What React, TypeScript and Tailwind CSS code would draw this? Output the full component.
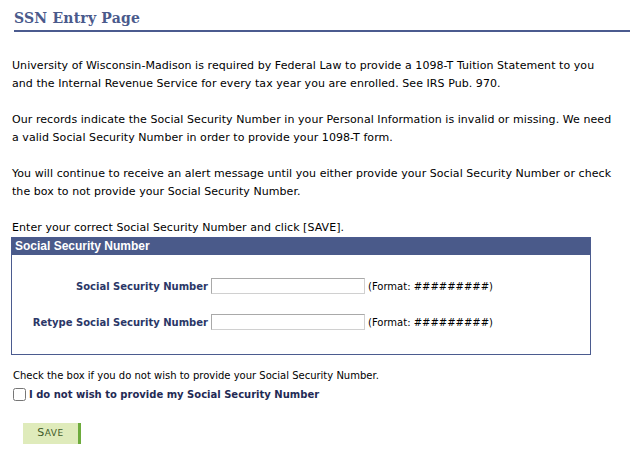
import React from "react";

const verdana = "font-['DejaVu_Sans',Verdana,sans-serif]";

function FieldRow({ label }: { label: string }) {
  return (
    <div className="flex items-center h-[16px]">
      <div className={`w-[199px] text-right pr-[3px] text-[10px] font-bold text-[#2b3767] ${verdana}`}>{label}</div>
      <input
        type="text"
        className="w-[154px] h-[16px] border border-[#a9a9a9] border-b-[#d0d0d0] border-r-[#d0d0d0] bg-white outline-none"
      />
      <span className={`ml-[3px] text-[10px] text-[#000] ${verdana}`}>(Format: #########)</span>
    </div>
  );
}

export default function App() {
  return (
    <div className={`w-[630px] h-[457px] bg-white text-black ${verdana}`}>
      <div className="pl-[14px] pt-[9px]">
        <h1 className="font-['DejaVu_Serif',Georgia,serif] font-bold text-[14px] leading-[18px] text-[#4a5a8c] tracking-[0.2px]">
          SSN Entry Page
        </h1>
        <div className="mt-[3px] h-[2px] bg-[#4b5b8f]" />
      </div>

      <div className="pl-[12px] w-[614px] pt-[25px] text-[11px] leading-[18px] tracking-[0.06px]">
        <p>
          University of Wisconsin-Madison is required by Federal Law to provide a 1098-T Tuition Statement to you
          <br />
          and the Internal Revenue Service for every tax year you are enrolled. See IRS Pub. 970.
        </p>
        <p className="mt-[18px]">
          Our records indicate the Social Security Number in your Personal Information is invalid or missing. We need a
          valid Social Security Number in order to provide your 1098-T form.
        </p>
        <p className="mt-[18px]">
          You will continue to receive an alert message until you either provide your Social Security Number or check
          the box to not provide your Social Security Number.
        </p>
        <p className="mt-[18px]">Enter your correct Social Security Number and click [SAVE].</p>
      </div>

      <div className="ml-[11px] w-[580px] h-[118px] border border-[#4b5b8f]">
        <div className="h-[17px] bg-[#4a5a8a] pl-[3px] font-['Liberation_Sans',Arial,sans-serif] font-bold text-[12px] leading-[17px] text-white">
          Social Security Number
        </div>
        <div className="pt-[23px] flex flex-col gap-[20px]">
          <FieldRow label="Social Security Number" />
          <FieldRow label="Retype Social Security Number" />
        </div>
      </div>

      <div className="pl-[13px] pt-[14px]">
        <div className="text-[10px] leading-[13px]">Check the box if you do not wish to provide your Social Security Number.</div>
        <label className="mt-[5px] flex items-center gap-[3px]">
          <input type="checkbox" className="w-[13px] h-[13px] m-0" />
          <span className="text-[10px] font-bold text-[#1f2a55]">I do not wish to provide my Social Security Number</span>
        </label>
        <button
          type="button"
          className="mt-[21px] ml-[10px] w-[58px] h-[21px] bg-[#dfebbb] border-r-[3px] border-[#6dab3c] text-[#3f5b29] text-[11px] tracking-[0.5px]"
        >
          S<span className="text-[9px]">AVE</span>
        </button>
      </div>
    </div>
  );
}
